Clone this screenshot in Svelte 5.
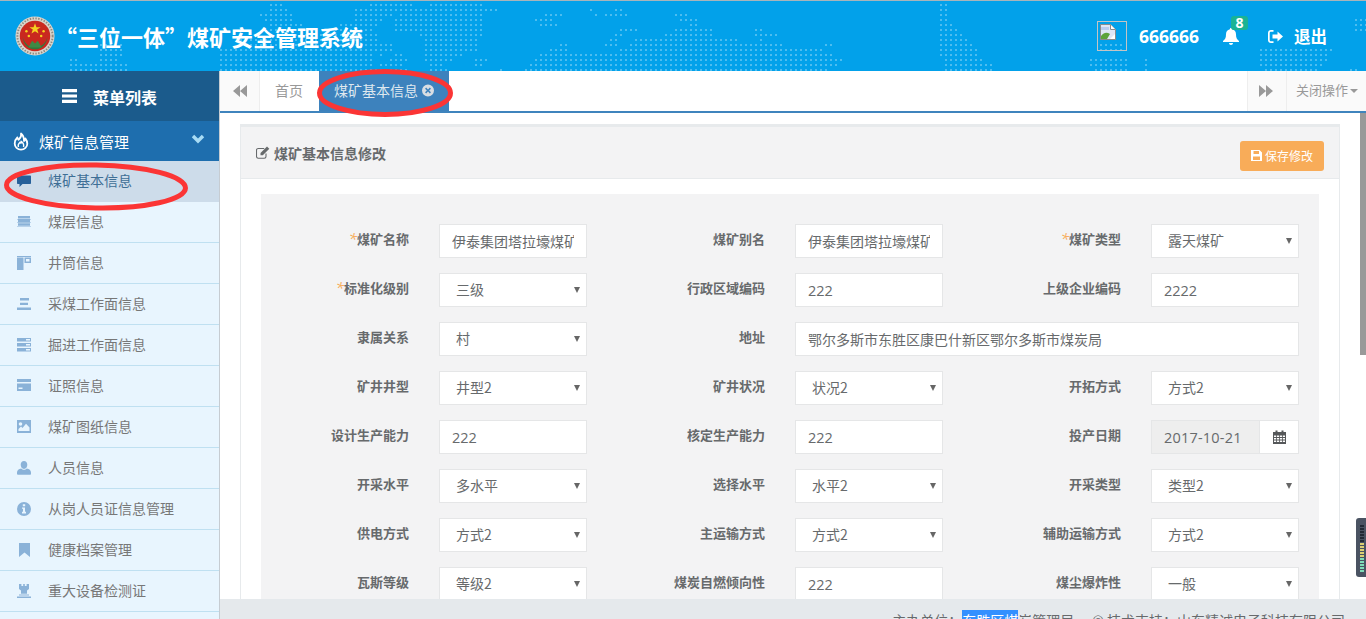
<script>
  const mapRows = [
    [4, [[267,280],[369,410],[426,480],[936,948]]],
    [9, [[267,287],[353,497],[586,594],[612,620],[681,684],[936,948]]],
    [14, [[260,290],[353,393],[400,480],[544,563],[591,598],[605,629],[674,686],[936,946]]],
    [19, [[263,293],[353,384],[391,480],[535,553],[679,697],[936,946],[1353,1366]]],
    [24, [[267,300],[340,376],[391,480],[539,558],[690,697],[936,952],[1353,1366]]],
    [29, [[270,310],[330,370],[395,480],[617,636],[674,711],[752,763],[936,959],[1353,1366]]],
    [34, [[280,376],[417,480],[612,620],[664,711],[752,775],[940,964]]],
    [39, [[240,376],[421,476],[608,615],[631,737],[756,763],[940,969]]],
    [44, [[97,120],[240,392],[421,476],[560,568],[603,615],[627,780],[825,832],[940,973],[1100,1120]]],
    [49, [[97,123],[217,392],[421,476],[546,568],[617,820],[940,978],[1100,1120],[1259,1331]]],
    [54, [[97,120],[217,374],[380,382],[395,402],[421,464],[539,832],[940,978],[1259,1329]]],
    [59, [[67,77],[97,117],[217,374],[388,407],[421,454],[473,485],[535,841],[945,983],[1089,1129],[1141,1149],[1259,1326]]],
    [64, [[67,127],[220,374],[379,402],[426,440],[473,480],[530,837],[945,992],[1089,1129],[1141,1149],[1259,1320]]],
    [69, [[67,127],[220,407],[426,445],[499,501],[525,827],[945,992],[1091,1129],[1141,1149],[1264,1316],[1348,1356]]]
  ];
  const dots = [];
  for (const [y, spans] of mapRows) {
    for (const [a, b] of spans) {
      const start = Math.ceil(a / 5) * 5;
      for (let x = start; x <= b; x += 5) dots.push([x, y]);
    }
  }

  const menu = [
    { t: '煤矿基本信息', active: true, d: 'M1 1.5h12c.6 0 1 .4 1 1V9c0 .6-.4 1-1 1H5.5L2.5 13V10H1c-.6 0-1-.4-1-1V2.5c0-.6.4-1 1-1z' },
    { t: '煤层信息', d: 'M1 1h12v2.6H1zM0 3.9h14v.5H0zM1 4.6h12v2.6H1zM0 7.5h14v.5H0zM1 8.2h12v2.6H1zM0 11h14v.5H0z' },
    { t: '井筒信息', d: 'M0 0h14v1H0zM0 1.5h6.5V14H0zM7.5 1.5H14V7H7.5zM9 3v2.5h3.5V3z' },
    { t: '采煤工作面信息', d: 'M3 1h9v2.4H3zM3 5.7h8v2.4H3zM0 10.5h14V13H0z' },
    { t: '掘进工作面信息', d: 'M0 0h14v3.6H0zM0 5h14v3.6H0zM0 10h14v3.6H0zM9 1v1.4h4V1zM9 6v1.4h4V6zM9 11v1.4h4V11z' },
    { t: '证照信息', d: 'M0 0h14v3H0zM0 4.6h14V12H0zM1.5 8.5v1.6h4V8.5z' },
    { t: '煤矿图纸信息', d: 'M0 0h14v13H0zM3.5 2.2a1.8 1.8 0 1 0 0 3.6 1.8 1.8 0 0 0 0-3.6zM1.5 11h11V7.5L9 3.8 5.5 8 4 6.5 1.5 9z' },
    { t: '人员信息', d: 'M7 0c2 0 3.3 1.7 3.3 3.8S9 8 7 8 3.7 5.9 3.7 3.8 5 0 7 0zM4.2 7.4C5 8.3 6 8.8 7 8.8s2-.5 2.8-1.4c2.4.4 4.2 1.4 4.2 4.1V13c0 .4-.4.8-1 .8H1c-.6 0-1-.4-1-.8v-1.5c0-2.7 1.8-3.7 4.2-4.1z' },
    { t: '从岗人员证信息管理', d: 'M7 0a7 7 0 1 1 0 14A7 7 0 0 1 7 0zM5.8 2.2v2h2.4v-2zM5 5.4v1.4h1v3H5v1.6h4V9.8H8V5.4z' },
    { t: '健康档案管理', d: 'M2 0h11v14L7.5 9.5 2 14z' },
    { t: '重大设备检测证', d: 'M2 0h2.4v2h1.8V0h1.6v2h1.8V0H12v5L10 6.6v3.2h-.2H4V6.6L2 5zM2 10.6h10v1H2zM0 12.4h14V14H0z' }
  ];

  const T = (label, value, req = false) => ({ kind: 'text', label, value, req });
  const N = (label, value) => ({ kind: 'text', label, value, num: true });
  const S = (label, value, req = false) => ({ kind: 'select', label, value, req });
  const mine = '伊泰集团塔拉壕煤矿';
  const fields = [
    T('煤矿名称', mine, true), T('煤矿别名', mine), S('煤矿类型', '露天煤矿', true),
    S('标准化级别', '三级', true), N('行政区域编码', '222'), N('上级企业编码', '2222'),
    S('隶属关系', '村'), { kind: 'text', label: '地址', value: '鄂尔多斯市东胜区康巴什新区鄂尔多斯市煤炭局', wide: true },
    S('矿井井型', '井型2'), S('矿井状况', '状况2'), S('开拓方式', '方式2'),
    N('设计生产能力', '222'), N('核定生产能力', '222'), { kind: 'date', label: '投产日期', value: '2017-10-21' },
    S('开采水平', '多水平'), S('选择水平', '水平2'), S('开采类型', '类型2'),
    S('供电方式', '方式2'), S('主运输方式', '方式2'), S('辅助运输方式', '方式2'),
    S('瓦斯等级', '等级2'), N('煤炭自燃倾向性', '222'), S('煤尘爆炸性', '一般')
  ];
  const leds = [0,1,2,3,4,5,6,7,8,9,10,11,12,13,14,15];
</script>

<div class="app">
  <header class="top">
    <svg class="map" width="1366" height="70" viewBox="0 1 1366 70" aria-hidden="true">
      {#each dots as [x, y]}
        <rect {x} {y} width="2" height="2" fill="#4cbdf0" />
      {/each}
    </svg>
    <svg class="logo" width="40" height="40" viewBox="0 0 42 42" aria-hidden="true">
      <circle cx="21" cy="21" r="20.5" fill="#d9d4cc" />
      <circle cx="21" cy="21" r="18.5" fill="none" stroke="#8f8a80" stroke-width="2" stroke-dasharray="1.5 1.5" />
      <circle cx="21" cy="21" r="16" fill="#c9281f" />
      <path d="M8 22c1 8 6 13 13 13s12-5 13-13c-2 7-6 9-8 10l-5-2-5 2c-3-1-6-4-8-10z" fill="#2f7a3c" />
      <path d="M14 33l4-7 3 3 3-3 4 7z" fill="#3f8a45" />
      <path d="M21 7.5l1.5 4.2h4.4l-3.6 2.6 1.4 4.2-3.7-2.6-3.7 2.6 1.4-4.2-3.6-2.6h4.4z" fill="#f5d020" />
      <circle cx="12" cy="16" r="1.3" fill="#f5d020" /><circle cx="30" cy="16" r="1.3" fill="#f5d020" />
      <circle cx="14.5" cy="21" r="1.3" fill="#f5d020" /><circle cx="27.5" cy="21" r="1.3" fill="#f5d020" />
    </svg>
    <h1 class="title"><span class="q1">“</span>三位一体<span class="q2">”</span>煤矿安全管理系统</h1>
    <div class="tools">
      <div class="avatar">
        <svg width="16" height="16" viewBox="0 0 16 16" aria-hidden="true">
          <path d="M.5.5h10l5 5v10H.5z" fill="#dfe6f5" stroke="#8b8b8b" />
          <path d="M1 3h8v3H1z" fill="#b9ccef" />
          <path d="M1 15v-3c3-4 6-4 9-2l-3 5z" fill="#5da33a" />
          <path d="M10.500.5v5h5" fill="#fff" stroke="#8b8b8b" />
          <path d="M10 15l5-5v5z" fill="#fff" />
        </svg>
      </div>
      <span class="user">666666</span>
      <span class="bell">
        <svg width="16" height="17" viewBox="0 0 16 17" aria-hidden="true">
          <path d="M8 0c.7 0 1.100.5 1.100 1.200 2.600.5 3.900 2.500 3.900 5 0 3.800 1 5 3 6.800v1H0v-1c2-1.800 3-3 3-6.800 0-2.500 1.300-4.500 3.900-5C6.900.5 7.300 0 8 0zM6 15h4c0 1.100-.9 2-2 2s-2-.9-2-2z" fill="#fff" />
        </svg>
        <b class="badge">8</b>
      </span>
      <span class="logout">
        <svg width="15" height="13" viewBox="0 0 15 13" aria-hidden="true">
          <path d="M5.500 0v1.700H3c-.8 0-1.300.5-1.300 1.300v7c0 .8.500 1.300 1.300 1.300h2.500V13H3c-1.700 0-3-1.300-3-3V3c0-1.700 1.300-3 3-3zM9.500 1.500l5.500 5-5.500 5V8.500H4.500v-4h5z" fill="#fff" />
        </svg>
        退出
      </span>
    </div>
  </header>

  <div class="main">
    <aside class="side">
      <div class="side-head">
        <svg width="15" height="14" viewBox="0 0 15 14" aria-hidden="true"><path d="M0 0h15v3.200H0zM0 5.400h15v3.200H0zM0 10.800h15V14H0z" fill="#fff" /></svg>
        <span>菜单列表</span>
      </div>
      <div class="group">
        <svg class="fire" width="16" height="19" viewBox="0 0 16 19" aria-hidden="true">
          <path d="M8 1.500C9 4.500 7 6 5.600 7.800 4.800 7 4.500 6.400 4.400 5.500 2.500 7.300 1.700 9.300 1.700 11.500c0 3.400 2.800 6.100 6.300 6.100s6.300-2.700 6.300-5.900c0-2.400-1-4-2-5.300-.1 1.200-.5 2-1.300 2.600C11 6.500 10.300 3.300 8 1.500z" fill="none" stroke="#fff" stroke-width="1.800" stroke-linejoin="round" />
          <path d="M5.500 15c-1-2 .5-3.700 1.500-4.700.4 1.400 1.600 1 1.500-.6 1.600 1.100 2.600 3 2 5.300" fill="none" stroke="#fff" stroke-width="1.400" />
        </svg>
        <span>煤矿信息管理</span>
        <svg class="chev" width="14" height="10" viewBox="0 0 14 10" aria-hidden="true"><path d="M2 2l5 5 5-5" fill="none" stroke="#a8dcf5" stroke-width="3.400" /></svg>
      </div>
      <ul class="items">
        {#each menu as m}
          <li class:active={m.active}>
            <svg width="14" height="14" viewBox="0 0 14 14" aria-hidden="true"><path d={m.d} fill-rule="evenodd" /></svg>
            <span>{m.t}</span>
          </li>
        {/each}
      </ul>
    </aside>

    <section class="right">
      <nav class="tabs">
        <div class="tab-btn">
          <svg width="14" height="12" viewBox="0 0 14 12" aria-hidden="true"><path d="M7 0v12L0 6zM14 0v12L7 6z" fill="#999" /></svg>
        </div>
        <div class="tab">首页</div>
        <div class="tab current">
          煤矿基本信息
          <svg width="13" height="13" viewBox="0 0 13 13" aria-hidden="true"><path d="M6.500 0a6.500 6.500 0 1 1 0 13 6.500 6.500 0 0 1 0-13zM4.500 3.300L3.300 4.500l2 2-2 2 1.200 1.200 2-2 2 2 1.200-1.200-2-2 2-2-1.200-1.200-2 2z" fill="#d9dee3" fill-rule="evenodd" /></svg>
        </div>
        <div class="tab-fill"></div>
        <div class="tab-btn edge">
          <svg class="nudge" width="14" height="12" viewBox="0 0 14 12" aria-hidden="true"><path d="M0 0v12l7-6zM7 0v12l7-6z" fill="#999" /></svg>
        </div>
        <div class="close-ops">关闭操作<i></i></div>
      </nav>

      <div class="content">
        <div class="card">
          <div class="card-head">
            <h2>
              <svg width="14" height="13" viewBox="0 0 14 13" aria-hidden="true">
                <path d="M10 7.500V10.500c0 1-.7 1.700-1.700 1.700H2.200C1.200 12.200.5 11.500.5 10.500V4.200c0-1 .7-1.700 1.700-1.700h6" fill="none" stroke="#676a6c" stroke-width="1.100" />
                <path d="M4.500 7l6.500-6.500 2.300 2.300L6.800 9.300H4.500z" fill="#676a6c" />
              </svg>
              煤矿基本信息修改
            </h2>
            <button class="save" type="button">
              <svg width="11" height="11" viewBox="0 0 11 11" aria-hidden="true">
                <path d="M0 0h8.500L11 2.500V11H0zM2.500 1v3h5.500V1zM2 6.500V10h7V6.500z" fill="#fff" fill-rule="evenodd" />
              </svg>
              保存修改
            </button>
          </div>
          <div class="panel">
            <div class="form">
              {#each fields as f}
                <div class="field" class:wide={f.wide}>
                  <label class="lab">{#if f.req}<em>*</em>{/if}{f.label}</label>
                  {#if f.kind === 'text'}
                    <input class="ctl" class:num={f.num} class:widectl={f.wide} type="text" value={f.value} />
                  {:else if f.kind === 'select'}
                    <div class="sel">
                      <select class="ctl">
                        <option>{f.value}</option>
                      </select>
                    </div>
                  {:else}
                    <div class="date">
                      <input class="ctl num" type="text" value={f.value} disabled />
                      <span class="addon">
                        <svg width="13" height="14" viewBox="0 0 13 14" aria-hidden="true">
                          <path d="M0 2h2.500V.5h2V2h4V.5h2V2H13v12H0zM1 5.500v1.600h2.200V5.500zM4 5.500v1.600h2.200V5.500zM7 5.500v1.600h2.200V5.500zM10 5.500v1.600h2V5.500zM1 8v1.600h2.200V8zM4 8v1.600h2.200V8zM7 8v1.600h2.200V8zM10 8v1.600h2V8zM1 10.500V12h2.200v-1.500zM4 10.500V12h2.200v-1.500zM7 10.500V12h2.200v-1.500zM10 10.500V12h2v-1.500z" fill="#56585a" fill-rule="evenodd" />
                        </svg>
                      </span>
                    </div>
                  {/if}
                </div>
              {/each}
            </div>
          </div>
        </div>
      </div>

      <footer class="foot">主办单位：<span class="picked">东胜区煤</span>炭管理局<span class="spacer"></span>© 技术支持：山东精诚电子科技有限公司</footer>

      <div class="thumb"></div>
    </section>
  </div>

  <div class="widget">
    {#each leds as n}
      <i class:y={n >= 6 && n < 11} class:g={n >= 11}></i>
    {/each}
  </div>

  <svg class="marks" width="1366" height="619" viewBox="0 0 1366 619" aria-hidden="true">
    <ellipse cx="385" cy="93" rx="65.500" ry="21.500" />
    <ellipse cx="96" cy="186.500" rx="89.500" ry="21.500" transform="rotate(1 96 186.500)" />
  </svg>
</div>

<style>
  :global(body) {
    margin: 0;
    overflow: hidden;
    background: #fff;
  }
  .app {
    position: relative;
    display: flex;
    flex-direction: column;
    height: 619px;
    overflow: hidden;
    font-family: "Noto Sans CJK SC", "Open Sans", sans-serif;
    font-size: 14px;
    color: #676a6c;
  }
  .top {
    position: relative;
    flex: none;
    display: flex;
    align-items: center;
    box-sizing: border-box;
    height: 71px;
    padding-left: 15px;
    background: #02a1ea;
    border-top: 1px solid #a9b4ba;
    color: #fff;
  }
  .map {
    position: absolute;
    left: 0;
    top: 0;
  }
  .logo {
    position: relative;
    flex: none;
  }
  .title {
    position: relative;
    display: flex;
    margin: 0 0 0 8px;
    font-size: 22px;
    font-weight: 700;
    line-height: 30px;
    white-space: nowrap;
  }
  .q1 {
    width: 22px;
    margin-left: -8px;
  }
  .q2 {
    width: 22px;
  }
  .tools {
    position: relative;
    display: flex;
    align-items: center;
    margin-left: auto;
    padding-right: 39px;
  }
  .avatar {
    display: flex;
    box-sizing: border-box;
    width: 30px;
    height: 30px;
    padding: 2px;
    border: 1px solid #c4c4c4;
  }
  .user {
    margin-left: 12px;
    font-family: "Open Sans", sans-serif;
    font-size: 17.500px;
    font-weight: 700;
  }
  .bell {
    position: relative;
    display: flex;
    margin-left: 24px;
  }
  .badge {
    position: absolute;
    left: 8px;
    top: -12px;
    width: 17px;
    height: 14px;
    border-radius: 3px;
    background: #1ab394;
    font-family: "Open Sans", sans-serif;
    font-size: 14px;
    line-height: 14px;
    text-align: center;
  }
  .logout {
    display: flex;
    align-items: center;
    gap: 11px;
    margin-left: 29px;
    font-size: 16.500px;
    font-weight: 700;
  }
  .main {
    flex: 1;
    display: flex;
    min-height: 0;
  }
  .side {
    flex: none;
    box-sizing: border-box;
    width: 220px;
    background: #e8f5fe;
    border-right: 1px solid #c6ccd2;
    overflow: hidden;
  }
  .side-head {
    display: flex;
    align-items: center;
    gap: 16px;
    box-sizing: border-box;
    height: 50px;
    padding-left: 62px;
    background: #1b5b8c;
    color: #fff;
    font-size: 16px;
    font-weight: 700;
  }
  .side-head span {
    margin-top: 2px;
  }
  .group {
    display: flex;
    align-items: center;
    box-sizing: border-box;
    height: 40px;
    padding-left: 13px;
    background: #1e6eae;
    color: #fff;
    font-size: 15px;
  }
  .group span {
    margin-left: 10px;
  }
  .chev {
    margin-left: auto;
    margin-right: 14px;
    margin-top: -4px;
  }
  .items {
    margin: 0;
    padding: 0;
    list-style: none;
  }
  .items li {
    display: flex;
    align-items: center;
    gap: 17px;
    box-sizing: border-box;
    height: 41px;
    padding-left: 17px;
    border-bottom: 1px solid #bfe0f1;
    color: #777;
  }
  .items li span {
    margin-bottom: 2px;
  }
  .items li svg {
    flex: none;
    fill: #8ab2d8;
  }
  .items li.active {
    background: #cddcea;
    border-bottom-color: #cddcea;
    color: #3f6f96;
  }
  .items li.active svg {
    fill: #26609a;
  }
  .right {
    position: relative;
    flex: 1;
    display: flex;
    flex-direction: column;
    min-width: 0;
  }
  .tabs {
    flex: none;
    display: flex;
    box-sizing: border-box;
    height: 42px;
    background: #fafafa;
    border-bottom: 2px solid #3f84bd;
  }
  .tab-btn {
    display: flex;
    align-items: center;
    justify-content: center;
    box-sizing: border-box;
    width: 40px;
    border-right: 1px solid #eee;
    background: #fafafa;
  }
  .tab-btn.edge {
    border-left: 1px solid #eee;
  }
  .nudge {
    margin-right: 2px;
  }
  .tab {
    display: flex;
    align-items: center;
    box-sizing: border-box;
    width: 59px;
    padding: 0 15px 2px;
    background: #fff;
    color: #999;
  }
  .tab.current {
    gap: 4px;
    width: 130px;
    background: #3d82bd;
    color: #dfe8ef;
    white-space: nowrap;
  }
  .tab-fill {
    flex: 1;
    background: #fff;
  }
  .close-ops {
    display: flex;
    align-items: center;
    width: 79px;
    box-sizing: border-box;
    padding: 0 0 4px 9px;
    font-size: 13px;
    color: #999;
    white-space: nowrap;
  }
  .close-ops i {
    margin: 3px 0 0 2px;
    border: 4px solid transparent;
    border-top-color: #999;
    border-bottom: 0;
  }
  .content {
    flex: 1;
    min-height: 0;
    overflow: hidden;
    padding: 11px 26px 0 20px;
    background: #fff;
  }
  .card {
    box-sizing: border-box;
    border-top: 3px solid #e7eaec;
    border-left: 1px solid #e7eaec;
    border-right: 1px solid #e7eaec;
    background: #fff;
  }
  .card-head {
    display: flex;
    align-items: center;
    justify-content: space-between;
    box-sizing: border-box;
    height: 52px;
    padding: 0 15px;
    background: #f3f3f4;
    border-bottom: 1px solid #e7eaec;
  }
  .card-head h2 {
    display: flex;
    align-items: center;
    gap: 4px;
    margin: 0;
    font-size: 14px;
    font-weight: 700;
    color: #676a6c;
  }
  .save {
    display: flex;
    align-items: center;
    justify-content: center;
    gap: 3px;
    box-sizing: border-box;
    width: 84px;
    height: 30px;
    margin-top: 6px;
    padding: 0;
    border: 0;
    border-radius: 3px;
    background: #f8ac59;
    color: #fff;
    font-family: inherit;
    font-size: 12px;
  }
  .panel {
    margin: 15px 20px 0;
    padding: 30px 20px 30px 0;
    background: #f3f3f4;
  }
  .form {
    display: grid;
    grid-template-columns: 326px 356px 356px;
    row-gap: 15px;
  }
  .field {
    display: flex;
    align-items: center;
  }
  .field.wide {
    grid-column: span 2;
  }
  .lab {
    flex: 1;
    margin-right: 30px;
    padding-bottom: 5px;
    font-size: 13px;
    font-weight: 700;
    text-align: right;
    white-space: nowrap;
    color: #676a6c;
  }
  .lab em {
    font-family: "Open Sans", sans-serif;
    font-size: 15px;
    font-style: italic;
    font-weight: 400;
    line-height: 1;
    color: #f8ac59;
  }
  .ctl {
    display: block;
    box-sizing: border-box;
    width: 148px;
    height: 34px;
    padding: 0 12px;
    border: 1px solid #e5e6e7;
    border-radius: 0;
    outline: 0;
    background: #fff;
    color: #676a6c;
    font-family: inherit;
    font-size: 14px;
  }
  .ctl.num {
    font-family: "Open Sans", sans-serif;
    font-size: 14.500px;
  }
  .ctl.widectl {
    width: 504px;
  }
  .sel {
    position: relative;
  }
  .sel select {
    padding-left: 16px;
    padding-bottom: 2px;
    appearance: none;
  }
  .sel::after {
    content: "";
    position: absolute;
    right: 7px;
    top: 14px;
    border: 3.500px solid transparent;
    border-top: 6px solid #666;
    border-bottom: 0;
  }
  .date {
    display: flex;
  }
  .date .ctl {
    width: 108px;
    border-right: 0;
    background: #eee;
    opacity: 1;
    letter-spacing: 0.2px;
  }
  .addon {
    display: flex;
    align-items: center;
    justify-content: center;
    box-sizing: border-box;
    width: 40px;
    height: 34px;
    background: #fff;
    border: 1px solid #e5e6e7;
  }
  .foot {
    flex: none;
    box-sizing: border-box;
    height: 20px;
    padding: 11px 21px 0 0;
    overflow: hidden;
    background: #e5e9ec;
    color: #676a6c;
    font-size: 14px;
    line-height: 20px;
    text-align: right;
    white-space: nowrap;
  }
  .picked {
    background: #3390ff;
    color: #fff;
  }
  .spacer {
    display: inline-block;
    width: 18px;
  }
  .thumb {
    position: absolute;
    right: 0;
    top: 42px;
    width: 6px;
    height: 242px;
    background: #999;
  }
  .widget {
    position: absolute;
    right: 0;
    top: 518px;
    display: flex;
    flex-direction: column;
    gap: 1px;
    box-sizing: border-box;
    width: 10px;
    height: 59px;
    padding: 7px 0 0 4px;
    background: #4a5362;
    border-radius: 3px 0 0 3px;
  }
  .widget i {
    display: block;
    width: 4px;
    height: 2px;
    background: #222a35;
  }
  .widget i.y {
    background: #dccf73;
  }
  .widget i.g {
    background: #7fdcb8;
  }
  .marks {
    position: absolute;
    left: 0;
    top: 0;
    pointer-events: none;
  }
  .marks ellipse {
    fill: none;
    stroke: #fb3535;
    stroke-width: 5px;
  }
</style>
